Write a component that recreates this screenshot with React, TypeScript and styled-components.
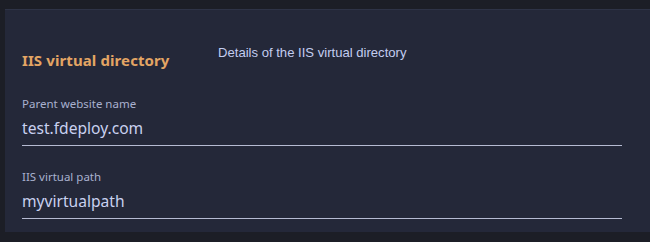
import React from "react";
import styled, { createGlobalStyle } from "styled-components";

const Global = createGlobalStyle`
  html, body { margin: 0; padding: 0; background: #1c1e26; }
  body { width: 650px; height: 242px; overflow: hidden; }
`;

const Page = styled.div`
  padding: 9px 0 10px 5px;
  height: 242px;
  box-sizing: border-box;
`;

const Panel = styled.section`
  background: #242839;
  border-top: 1px solid #2e3346;
  height: 100%;
  box-sizing: border-box;
  padding: 35px 28px 0 17px;
`;

const Header = styled.div`
  display: flex;
  align-items: flex-start;
`;

const Title = styled.h2`
  margin: 5px 0 0;
  width: 196px;
  font-family: "Noto Sans", sans-serif;
  font-weight: 700;
  font-size: 15px;
  color: #e3a564;
  letter-spacing: 0.1px;
`;

const Desc = styled.p`
  margin: 0;
  font-family: "Liberation Sans", Arial, sans-serif;
  font-size: 13.1px;
  color: #c3cdf0;
`;

const Field = styled.div<{ $top: number }>`
  margin-top: ${(p) => p.$top}px;
  display: flex;
  flex-direction: column;
`;

const Label = styled.label`
  font-family: "Noto Sans", sans-serif;
  font-size: 11.5px;
  color: #a9b1cf;
  line-height: 14px;
`;

const Value = styled.div`
  font-family: "Noto Sans", sans-serif;
  font-size: 15.6px;
  color: #c9d1f0;
  line-height: 22px;
  padding: 6px 0 6px;
  border-bottom: 1px solid #b6bbd2;
`;

export default function App() {
  return (
    <>
      <Global />
      <Page>
        <Panel>
          <Header>
            <Title>IIS virtual directory</Title>
            <Desc>Details of the IIS virtual directory</Desc>
          </Header>
          <Field $top={27}>
            <Label>Parent website name</Label>
            <Value>test.fdeploy.com</Value>
          </Field>
          <Field $top={24}>
            <Label>IIS virtual path</Label>
            <Value>myvirtualpath</Value>
          </Field>
        </Panel>
      </Page>
    </>
  );
}
